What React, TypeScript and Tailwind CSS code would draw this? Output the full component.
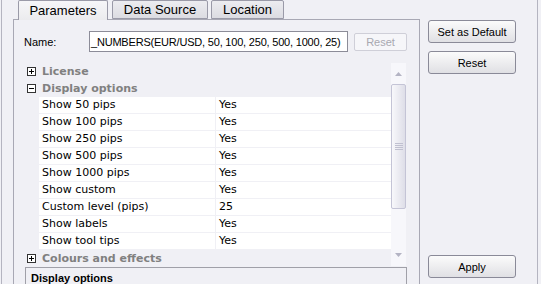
import React from "react";

const rows: [string, string][] = [
  ["Show 50 pips", "Yes"],
  ["Show 100 pips", "Yes"],
  ["Show 250 pips", "Yes"],
  ["Show 500 pips", "Yes"],
  ["Show 1000 pips", "Yes"],
  ["Show custom", "Yes"],
  ["Custom level (pips)", "25"],
  ["Show labels", "Yes"],
  ["Show tool tips", "Yes"],
];

function Box({ plus }: { plus: boolean }) {
  return (
    <svg width="9" height="9" viewBox="0 0 9 9" className="block">
      <rect x="0.5" y="0.5" width="8" height="8" fill="#fff" stroke="#333" />
      <line x1="2" y1="4.5" x2="7" y2="4.5" stroke="#000" />
      {plus && <line x1="4.5" y1="2" x2="4.5" y2="7" stroke="#000" />}
    </svg>
  );
}

function Category({ label, plus }: { label: string; plus: boolean }) {
  return (
    <div className="h-[17px] shrink-0 flex items-center">
      <div className="w-[15px] flex justify-end pr-[3px]">
        <Box plus={plus} />
      </div>
      <span className="pl-[3px] font-bold text-[11px] text-[#808080] font-['DejaVu_Sans',sans-serif] leading-none">
        {label}
      </span>
    </div>
  );
}

function Btn({ children, className = "" }: { children: React.ReactNode; className?: string }) {
  return (
    <div
      className={`w-[88px] h-[23px] shrink-0 flex items-center justify-center rounded-[3px] border border-[#8a8a98] bg-gradient-to-b from-[#fbfbfb] to-[#e0e0e4] text-[11px] text-black ${className}`}
    >
      {children}
    </div>
  );
}

export default function App() {
  return (
    <div className="w-[541px] h-[284px] overflow-hidden bg-[#f0f0f5] flex font-['Liberation_Sans',Arial,sans-serif] leading-[14px]">
      <div className="ml-[1px] w-[537px] h-full border-x border-[#b4b4c0] flex">
        {/* left column */}
        <div className="w-[418px] shrink-0 pl-[11px] flex flex-col">
          {/* tabs */}
          <div className="h-[19px] shrink-0 flex items-start text-[13px] text-black">
            <div className="relative z-10 ml-[5px] w-[90px] h-[20px] border border-b-0 border-[#9a9aa8] rounded-t-[2px] bg-gradient-to-b from-[#f6f6f8] to-[#ebebee] flex items-center justify-center">
              Parameters
            </div>
            <div className="ml-[4px] w-[96px] h-[19px] border border-[#9a9aa8] rounded-t-[2px] bg-gradient-to-b from-[#ececf0] to-[#dcdce2] flex items-center justify-center">
              Data Source
            </div>
            <div className="ml-[3px] w-[73px] h-[19px] border border-[#9a9aa8] rounded-t-[2px] bg-gradient-to-b from-[#ececf0] to-[#dcdce2] flex items-center justify-center">
              Location
            </div>
          </div>
          {/* panel */}
          <div className="w-[407px] h-[300px] shrink-0 border border-[#a8a8b4] flex flex-col">
            {/* Name row */}
            <div className="mt-[11px] h-[21px] shrink-0 flex items-center pl-[10px]">
              <div className="w-[65px] text-[11px] text-black">Name:</div>
              <div className="w-[259px] h-[21px] border border-[#8c8c98] bg-white flex items-center pl-[1px] text-[11px] tracking-[-0.2px] text-black whitespace-nowrap overflow-hidden">
                _NUMBERS(EUR/USD, 50, 100, 250, 500, 1000, 25)
              </div>
              <div className="ml-[6px] w-[53px] h-[18px] rounded-[2px] border border-[#cfcfd8] bg-[#f6f6f9] flex items-center justify-center text-[11px] text-[#a8a8b0]">
                Reset
              </div>
            </div>
            {/* grid */}
            <div className="mt-[11px] ml-[10px] flex h-[204px] shrink-0">
              <div className="w-[367px] flex flex-col">
                <Category label="License" plus={true} />
                <Category label="Display options" plus={false} />
                {rows.map(([k, v]) => (
                  <div key={k} className="h-[17px] shrink-0 flex">
                    <div className="w-[15px]" />
                    <div className="flex-1 flex bg-white border-b border-[#f0f0f5] font-['DejaVu_Sans',sans-serif] text-[11px] text-black">
                      <div className="w-[177px] pl-[3px] flex items-center border-r border-[#f0f0f5]">{k}</div>
                      <div className="flex-1 pl-[3px] flex items-center">{v}</div>
                    </div>
                  </div>
                ))}
                <Category label="Colours and effects" plus={true} />
              </div>
              {/* scrollbar */}
              <div className="w-[15px] h-[203px] bg-[#f7f7fb] flex flex-col items-center">
                <div className="h-[21px] w-full flex items-center justify-center">
                  <svg width="7" height="4" viewBox="0 0 7 4">
                    <path d="M0 4 L3.5 0 L7 4 Z" fill="#b4b4c4" />
                  </svg>
                </div>
                <div className="w-[15px] h-[125px] rounded-[2px] border border-[#c4c4d6] bg-gradient-to-r from-[#f8f8fb] to-[#dedee8] flex flex-col items-center justify-center gap-[1px]">
                  <div className="w-[8px] h-px bg-[#c0c0d0]" />
                  <div className="w-[8px] h-px bg-[#c0c0d0]" />
                  <div className="w-[8px] h-px bg-[#c0c0d0]" />
                  <div className="w-[8px] h-px bg-[#c0c0d0]" />
                </div>
                <div className="flex-1 w-full flex items-end justify-center pb-[9px]">
                  <svg width="7" height="4" viewBox="0 0 7 4">
                    <path d="M0 0 L3.5 4 L7 0 Z" fill="#b4b4c4" />
                  </svg>
                </div>
              </div>
            </div>
            {/* description */}
            <div className="ml-[11px] w-[382px] h-[40px] shrink-0 border border-[#a0a0a8] pl-[5px] pt-[3px]">
              <div className="font-bold text-[11px] leading-[14px] text-black">Display options</div>
            </div>
          </div>
        </div>
        {/* right column */}
        <div className="flex-1 pl-[8px] flex flex-col">
          <Btn className="mt-[20px]">Set as Default</Btn>
          <Btn className="mt-[8px]">Reset</Btn>
          <Btn className="mt-auto mb-[6px]">Apply</Btn>
        </div>
      </div>
    </div>
  );
}
